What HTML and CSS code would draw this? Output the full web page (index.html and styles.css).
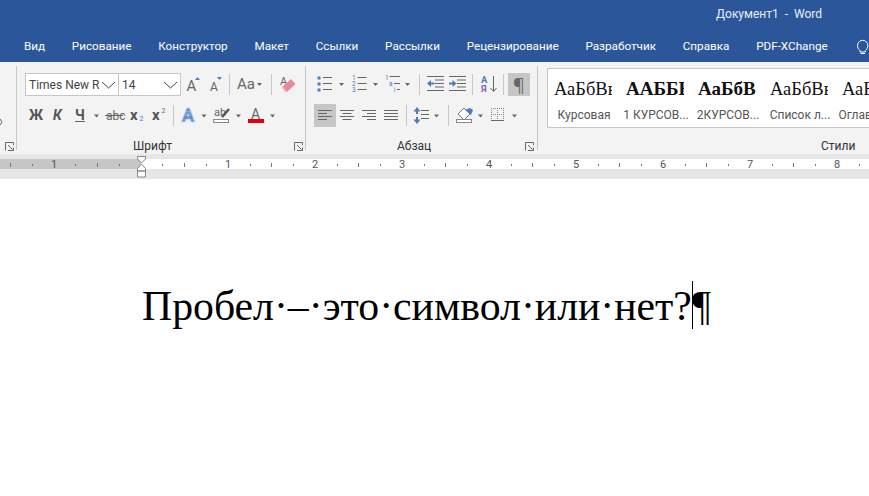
FILE: index.html
```html
<!DOCTYPE html>
<html lang="ru">
<head>
<meta charset="utf-8">
<title>Документ1 - Word</title>
<link rel="stylesheet" href="styles.css">
</head>
<body>
<header class="titlebar">
  <div class="doc-title">Документ1&nbsp; -&nbsp; Word</div>
  <nav class="tabs">
    <span>Вид</span><span>Рисование</span><span>Конструктор</span><span>Макет</span><span>Ссылки</span><span>Рассылки</span><span>Рецензирование</span><span>Разработчик</span><span>Справка</span><span>PDF-XChange</span>
    <svg class="bulb" width="16" height="16" viewBox="0 0 16 16"><path d="M5 11.500C3.500 10 2.500 8.700 2.500 6.500a5.200 5.200 0 0 1 10.400 0c0 2.200-1 3.500-2.500 5v1.500H5zM5.500 14.500h4.500"/></svg>
  </nav>
</header>

<section class="ribbon">
  <div class="group stub">
    <svg class="tail" width="3" height="6" viewBox="0 0 3 6"><path class="ln" d="M0 0 2 3 0 6"/></svg>
    <div class="foot"><svg class="launcher" width="9" height="9" viewBox="0 0 9 9"><path d="M.5 8.500V.5H8.500V3M3 8.500H8.500V5.500M3 3 7.500 7.500"/></svg></div>
  </div>

  <div class="group font-group">
    <div class="row">
      <div class="combo name"><span>Times New R</span><svg class="chev" width="15" height="8" viewBox="0 0 15 8"><path d="M1 1 7.500 7 14 1"/></svg></div>
      <div class="combo size"><span>14</span><svg class="chev" width="15" height="8" viewBox="0 0 15 8"><path d="M1 1 7.500 7 14 1"/></svg></div>
      <svg width="24" height="23" viewBox="0 0 24 23"><text class="t gl" x="5.500" y="17.500" font-size="15">A</text><path class="blue" d="M14 7h5l-2.500-3z"/></svg>
      <svg width="24" height="23" viewBox="0 0 24 23"><text class="t gl" x="5" y="17.500" font-size="12">A</text><path class="blue" d="M12 4h5l-2.500 3z"/></svg>
      <i class="sep"></i>
      <svg width="41" height="23" viewBox="0 0 41 23"><text class="t gl" x="7" y="16" font-size="15">Aa</text><path class="car" d="M27 10h5l-2.500 3z"/></svg>
      <i class="sep"></i>
      <svg width="26" height="23" viewBox="0 0 26 23"><text class="t gl" x="8" y="12" font-size="11">A</text><path class="pink" d="M10 14 19 6l4.500 5-8.500 8h-2z"/><path class="pink2" d="M10 14l4 5"/></svg>
    </div>
    <div class="row">
      <svg width="26" height="23" viewBox="0 0 26 23"><text class="t b" x="4" y="15.500" font-size="14">Ж</text></svg>
      <svg width="20" height="23" viewBox="0 0 20 23"><text class="t b it" x="2" y="15.500" font-size="14">К</text></svg>
      <svg width="34" height="23" viewBox="0 0 34 23"><text class="t b" x="4" y="15.500" font-size="14">Ч</text><path class="ln" d="M4 17.500h10"/><path class="car" d="M23 10.500h5l-2.500 3z"/></svg>
      <svg width="22" height="23" viewBox="0 0 22 23"><text class="t gl" x="1" y="15.500" font-size="12">abc</text><path class="ln" d="M0 11.500h18"/></svg>
      <svg width="22" height="23" viewBox="0 0 22 23"><text class="t b" x="3" y="15.500" font-size="15">x</text><text class="t blue-t" x="12.500" y="17" font-size="7">2</text></svg>
      <svg width="24" height="23" viewBox="0 0 24 23"><text class="t b" x="3" y="15.500" font-size="15">x</text><text class="t gl" x="12.500" y="9" font-size="7">2</text></svg>
      <i class="sep"></i>
      <svg width="39" height="23" viewBox="0 0 39 23"><text class="t glow" x="8.500" y="16.500" font-size="17">A</text><text class="t out" x="8.500" y="16.500" font-size="17">A</text><path class="car" d="M27.500 10.500h5l-2.500 3z"/></svg>
      <svg width="35" height="23" viewBox="0 0 35 23"><text class="t gl" x="1" y="12" font-size="11">ab</text><path class="pen" d="M9 13 16 5"/><rect class="box" x=".5" y="15.500" width="15" height="3"/><path class="car" d="M23 10.500h5l-2.500 3z"/></svg>
      <svg width="35" height="23" viewBox="0 0 35 23"><text class="t gl" x="3" y="15" font-size="14">A</text><rect class="red" x="0" y="15" width="16" height="4"/><path class="car" d="M22 10.500h5l-2.500 3z"/></svg>
    </div>
    <div class="foot"><span class="label font-label">Шрифт</span><svg class="launcher" width="9" height="9" viewBox="0 0 9 9"><path d="M.5 8.500V.5H8.500V3M3 8.500H8.500V5.500M3 3 7.500 7.500"/></svg></div>
  </div>

  <div class="group para-group">
    <div class="row">
      <svg width="34" height="23" viewBox="0 0 34 23"><path class="dots" d="M3.500 3.500h3v3h-3zM3.500 9.500h3v3h-3zM3.500 15.500h3v3h-3z"/><path class="ln" d="M9 4.500h9M9 10.500h9M9 16.500h9"/><path class="car" d="M25 10h5l-2.500 3z"/></svg>
      <svg width="33" height="23" viewBox="0 0 33 23"><text class="t blue-t" x="4" y="7" font-size="6.500">1</text><text class="t blue-t" x="4" y="13" font-size="6.500">2</text><text class="t blue-t" x="4" y="19" font-size="6.500">3</text><path class="ln" d="M9.500 4.500h9M9.500 10.500h9M9.500 16.500h9"/><path class="car" d="M25 10h5l-2.500 3z"/></svg>
      <svg width="38" height="23" viewBox="0 0 38 23"><text class="t blue-t" x="4" y="7" font-size="6.500">1</text><text class="t blue-t" x="8" y="13" font-size="6.500">a</text><text class="t blue-t" x="13" y="19" font-size="6.500">i</text><path class="ln" d="M8.500 3.500h10.500M13 10.500h6M16 16.500h3"/><path class="car" d="M24 10h5l-2.500 3z"/></svg>
      <i class="sep"></i>
      <svg width="27" height="23" viewBox="0 0 27 23"><path class="ln" d="M7 3.500h17M15 7h9M15 10.500h9M15 14h9M7 17.500h17"/><path class="blue" d="M7 10.500 11 7v2.500h3.500v2H11V14z"/></svg>
      <svg width="25" height="23" viewBox="0 0 25 23"><path class="ln" d="M2 3.500h17M10 7h9M10 10.500h9M10 14h9M2 17.500h17"/><path class="blue" d="M9.500 10.500 5.500 7v2.500H2v2h3.500V14z"/></svg>
      <i class="sep"></i>
      <svg width="30" height="23" viewBox="0 0 30 23"><text class="t blue-t b" x="8" y="10" font-size="9.500">A</text><text class="t purple b" x="8" y="19" font-size="9.500">Я</text><path class="ln" d="M20.500 3v15M17.500 15l3 3.500 3-3.500"/></svg>
      <i class="sep"></i>
      <div class="pilcrow on">¶</div>
    </div>
    <div class="row">
      <svg class="on" width="22" height="23" viewBox="0 0 22 23"><path class="ln" d="M4 6.500h14M4 9.500h9M4 12.500h14M4 15.500h9"/></svg>
      <svg width="22" height="23" viewBox="0 0 22 23"><path class="ln" d="M4 6.500h14M6.500 9.500h9M4 12.500h14M6.500 15.500h9"/></svg>
      <svg width="22" height="23" viewBox="0 0 22 23"><path class="ln" d="M4 6.500h14M9 9.500h9M4 12.500h14M9 15.500h9"/></svg>
      <svg width="26" height="23" viewBox="0 0 26 23"><path class="ln" d="M4 6.500h14M4 9.500h14M4 12.500h14M4 15.500h14"/></svg>
      <i class="sep"></i>
      <svg width="41" height="23" viewBox="0 0 41 23"><path class="ln" d="M14 6.500h8M14 10.500h8M14 14.500h8"/><path class="blue" d="M10 3 6.500 7.500h2.500v2.500h2V7.500h2.500zM10 20 6.500 15.500h2.500V13h2v2.500h2.500z"/><path class="car" d="M27 10.500h5l-2.500 3z"/></svg>
      <i class="sep"></i>
      <svg width="38" height="23" viewBox="0 0 38 23"><path class="bucket" d="M15 4 9 10l6 6 6-6z"/><path class="blue" d="M16 6l5-2 3 2-2 5z"/><rect class="box" x="7.500" y="15.500" width="15" height="3"/><path class="car" d="M29 10.500h5l-2.500 3z"/></svg>
      <svg width="30" height="23" viewBox="0 0 30 23"><path class="dash" d="M4 4.500h13M4 10.500h13M4.500 4v12M10.500 4v12M16.500 4v12"/><path class="ln" d="M4 16.500h13"/><path class="car" d="M25 10.500h5l-2.500 3z"/></svg>
    </div>
    <div class="foot"><span class="label para-label">Абзац</span><svg class="launcher" width="9" height="9" viewBox="0 0 9 9"><path d="M.5 8.500V.5H8.500V3M3 8.500H8.500V5.500M3 3 7.500 7.500"/></svg></div>
  </div>

  <div class="group styles-group">
    <div class="gallery">
      <div class="style"><div class="sample">АаБбВв</div><div class="sname">Курсовая</div></div>
      <div class="style"><div class="sample bold">ААББЕЕ</div><div class="sname">1 КУРСОВ...</div></div>
      <div class="style"><div class="sample bold">АаБбВ</div><div class="sname">2КУРСОВ...</div></div>
      <div class="style"><div class="sample">АаБбВв</div><div class="sname">Список л...</div></div>
      <div class="style"><div class="sample">АаБбВв</div><div class="sname">Оглавление</div></div>
    </div>
    <div class="foot"><span class="label styles-label">Стили</span></div>
  </div>
</section>

<svg class="ruler" width="869" height="25" viewBox="0 0 869 25">
  <rect class="r-band" width="869" height="25"/>
  <rect class="r-margin" y="5" width="141" height="10"/>
  <rect class="r-page" x="141" y="5" width="728" height="10"/>
  <path class="r-tick" d="M10.500 9v4M97.500 9v4M184.500 9v4M271.500 9v4M358.500 9v4M445.500 9v4M532.500 9v4M619.500 9v4M706.500 9v4M793.500 9v4M32.500 10v2M75.500 10v2M119.500 10v2M162.500 10v2M206.500 10v2M250.500 10v2M293.500 10v2M337.500 10v2M380.500 10v2M424.500 10v2M467.500 10v2M511.500 10v2M554.500 10v2M598.500 10v2M641.500 10v2M685.500 10v2M728.500 10v2M772.500 10v2M815.500 10v2M859.500 10v2"/>
  <g class="r-num"><text x="54" y="14">1</text><text x="228" y="14">1</text><text x="315" y="14">2</text><text x="402" y="14">3</text><text x="489" y="14">4</text><text x="576" y="14">5</text><text x="663" y="14">6</text><text x="750" y="14">7</text><text x="837" y="14">8</text></g>
  <path class="r-mark" d="M137.500 2.500h8v2.500l-4 4-4-4zM137.500 17v-2.500l4-4.500 4 4.500V17zM137.500 17h8v6h-8z"/>
</svg>

<main class="page">
  <p class="line">Пробел·–·это·символ·или·нет?<span class="caret-wrap"><i class="caret"></i>¶</span></p>
</main>
</body>
</html>
```
FILE: styles.css
```css
* { box-sizing: border-box; }
html, body { margin: 0; height: 100%; overflow: hidden; background: #fff; }
body { display: flex; flex-direction: column; font-family: Roboto, sans-serif; }
svg { display: block; flex: none; }

.titlebar { height: 62px; background: #2b579a; color: #fff; font-size: 11.700px; flex: none; }
.doc-title { height: 31px; padding: 5px 47px 0 0; font-size: 12px; text-align: right; color: #e8eef7; line-height: 18px; }
.tabs { display: flex; align-items: center; gap: 26.750px; height: 31px; padding-left: 24px; white-space: nowrap; line-height: 31px; }
.tabs span { flex: none; }
.bulb { margin-left: 1px; }
.bulb path { fill: none; stroke: #fff; stroke-width: 1; }

.ribbon { display: flex; height: 93px; flex: none; background: #f3f3f3; border-bottom: 1px solid #d4d4d4; color: #444; overflow: hidden; }
.group { display: flex; flex-direction: column; height: 84px; margin-top: 4px; padding-top: 7px; border-right: 1px solid #c6c6c6; flex: none; }
.stub { width: 17px; padding-left: 5px; padding-right: 1px; }
.tail { margin: 46px 0 0 -5px; }
.font-group { width: 289px; padding-left: 8px; padding-right: 1px; }
.para-group { width: 232px; padding-left: 8px; padding-right: 2px; }
.styles-group { width: 400px; padding: 2px 0 0 9px; border-right: 0; }
.row { display: flex; height: 23px; margin-bottom: 8px; flex: none; }
.sep { width: 1px; height: 21px; margin-top: 1px; background: #c6c6c6; flex: none; }

.combo { display: flex; align-items: center; height: 23px; background: #fff; border: 1px solid #c6c6c6; font-size: 12px; color: #444; flex: none; }
.combo span { flex: 1; overflow: hidden; white-space: nowrap; padding-left: 3px; }
.combo.name { width: 94px; }
.combo.size { width: 63px; margin-left: -1px; }
.chev { margin-right: 2px; }
.chev path { fill: none; stroke: #444; stroke-width: 1; }

.foot { display: flex; align-items: center; height: 14px; margin-top: auto; margin-bottom: -3px; font-size: 12px; line-height: 14px; }
.launcher { margin-left: auto; margin-right: 1px; }
.launcher path { fill: none; stroke: #666; stroke-width: 1; }
.label { color: #333; }
.font-label { margin-left: 108px; }
.para-label { margin-left: 83px; }
.styles-label { margin-left: 274px; }

.t { font-family: Roboto, sans-serif; fill: #555; }
.b { font-weight: 700; }
.it { font-style: italic; }
.gl { fill: #666; }
.blue-t { fill: #4a7ebb; }
.purple { fill: #8a5fb0; }
.blue { fill: #4a7ebb; }
.car { fill: #666; }
.ln { fill: none; stroke: #666; stroke-width: 1; }
.dots { fill: #4a7ebb; }
.pink { fill: #ea8a96; }
.pink2 { fill: none; stroke: #f6c6cc; stroke-width: 1.500; }
.glow { fill: none; stroke: #c5dcf3; stroke-width: 3; }
.out { fill: #fff; stroke: #5b8bc9; stroke-width: 1; }
.pen { fill: none; stroke: #555; stroke-width: 2.500; }
.box { fill: #fff; stroke: #888; stroke-width: 1; }
.red { fill: #e00010; }
.bucket { fill: #fff; stroke: #777; stroke-width: 1; }
.dash { fill: none; stroke: #888; stroke-width: 1; stroke-dasharray: 1 1; }
.on { background: #c6c6c6; }
.pilcrow { display: flex; align-items: center; justify-content: center; width: 22px; height: 23px; margin-left: 4px; font: 18px "Noto Sans", sans-serif; color: #666; }

.gallery { display: flex; width: 340px; height: 60px; background: #fff; border: 1px solid #c6c6c6; flex: none; }
.style { width: 72px; flex: none; text-align: center; overflow: hidden; }
.sample { height: 32px; margin: 0 8px 0 6px; padding-top: 9px; font: 18.500px/22px "Liberation Serif", serif; color: #111; overflow: hidden; white-space: nowrap; text-align: left; }
.sample.bold { font-size: 19px; font-weight: 700; }
.sname { margin-top: 6px; font-size: 12px; line-height: 16px; color: #555; white-space: nowrap; overflow: hidden; }

.ruler { flex: none; margin-top: -1px; }
.r-band { fill: #e6e6e6; }
.r-margin { fill: #c6c6c6; }
.r-page { fill: #fff; }
.r-tick { fill: none; stroke: #777; stroke-width: 1; }
.r-num text { font: 11px Roboto, sans-serif; fill: #555; text-anchor: middle; }
.r-mark { fill: #fff; stroke: #888; stroke-width: 1; }

.page { flex: 1; padding: 103px 0 0 142px; background: #fff; overflow: hidden; }
.line { margin: 0; font: 41.750px/48px "Liberation Serif", serif; color: #000; white-space: pre; }
.caret-wrap { position: relative; }
.caret { position: absolute; left: 0; top: -2px; width: 1px; height: 48px; background: #000; }
```
